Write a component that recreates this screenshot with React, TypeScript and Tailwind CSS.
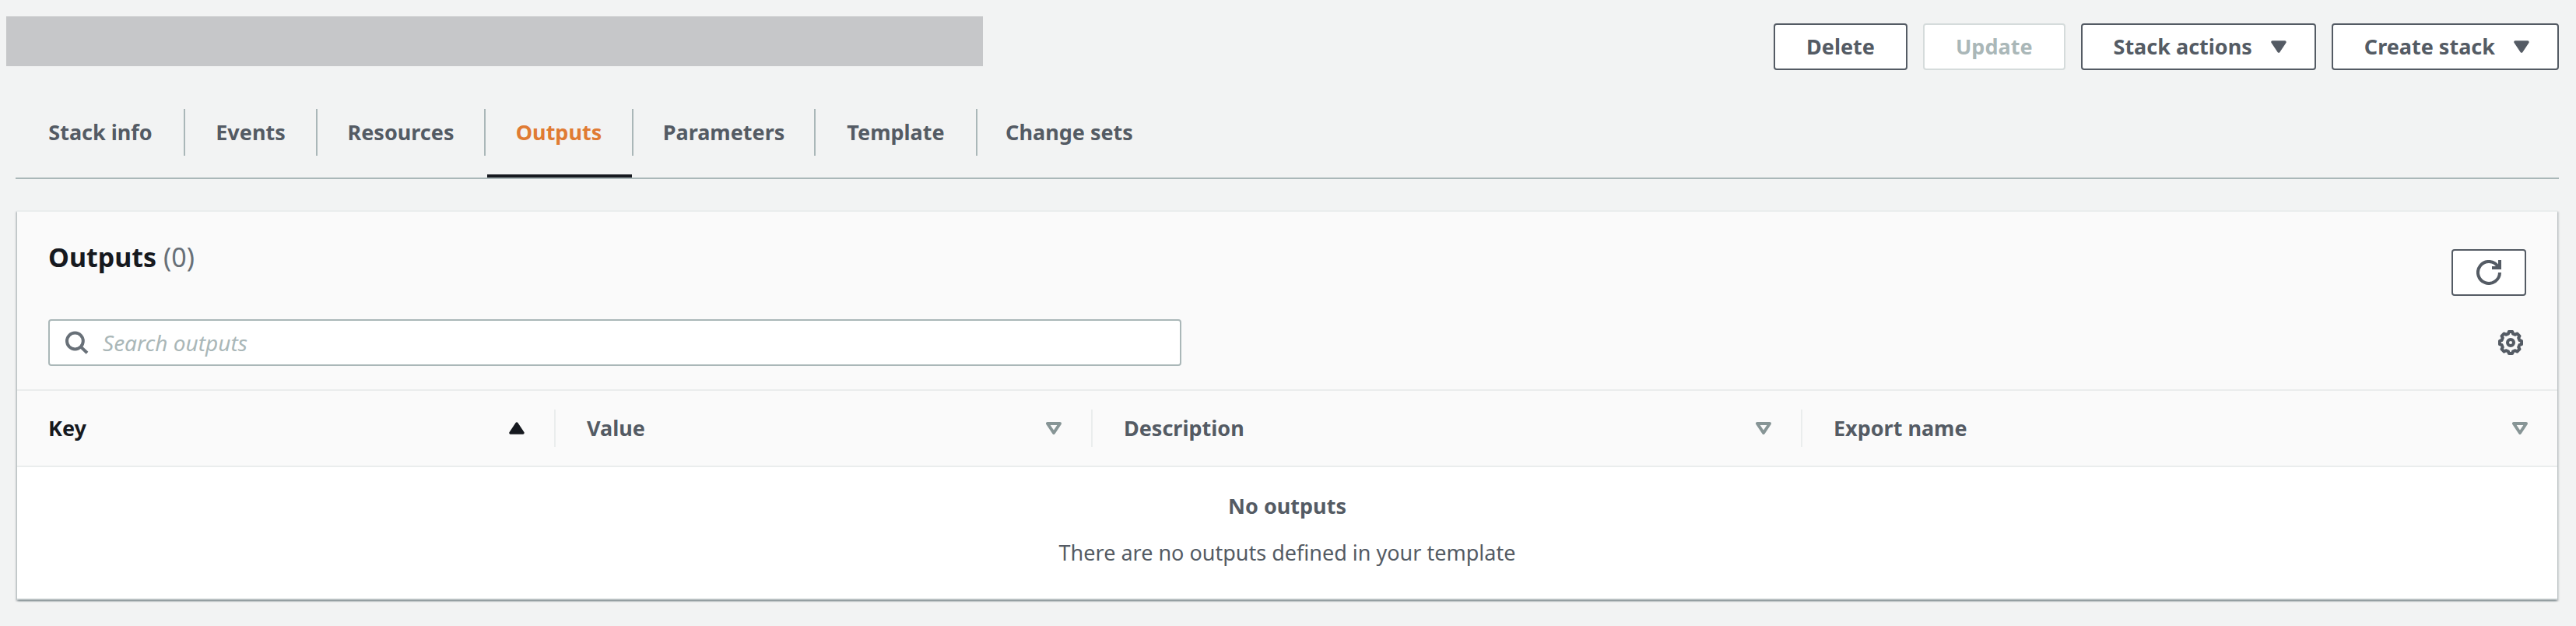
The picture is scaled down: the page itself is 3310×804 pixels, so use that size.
import type { ReactNode } from "react";

const tabs = [
  { label: "Stack info", width: "min-w-[216px]" },
  { label: "Events", width: "min-w-[170px]" },
  { label: "Resources", width: "min-w-[216px]" },
  { label: "Outputs", width: "min-w-[190px]" },
  { label: "Parameters", width: "min-w-[234px]" },
  { label: "Template", width: "min-w-[208px]" },
  { label: "Change sets", width: "min-w-[236px]" },
];

const columns = [
  { label: "Key", width: "w-[21.2%]", sorted: true },
  { label: "Value", width: "w-[21.14%]", sorted: false },
  { label: "Description", width: "w-[27.94%]", sorted: false },
  { label: "Export name", width: "w-[29.72%]", sorted: false },
];

function CaretDown() {
  return (
    <svg viewBox="0 0 20 16" className="h-4 w-5" aria-hidden="true">
      <path d="M2 2h16L10 14z" fill="currentColor" stroke="currentColor" strokeWidth="3.4" strokeLinejoin="round" />
    </svg>
  );
}

function SortIcon({ sorted }: { sorted: boolean }) {
  return sorted ? (
    <svg viewBox="0 0 20 16" className="h-4 w-5 text-[#16191f]" aria-hidden="true">
      <path d="M2 14h16L10 2z" fill="currentColor" stroke="currentColor" strokeWidth="3.4" strokeLinejoin="round" />
    </svg>
  ) : (
    <svg viewBox="0 0 20 16" className="h-4 w-5 text-[#879596]" aria-hidden="true">
      <path d="M2 2h16L10 14z" fill="none" stroke="currentColor" strokeWidth="4" strokeLinejoin="round" />
    </svg>
  );
}

function RefreshIcon() {
  return (
    <svg viewBox="0 0 16 16" className="size-8" fill="none" stroke="currentColor" strokeWidth="2" aria-hidden="true">
      <path d="M10 5h5V0" />
      <path d="M15 8a7 7 0 1 1-1.1-3.8" />
    </svg>
  );
}

function SearchIcon() {
  return (
    <svg viewBox="0 0 16 16" className="size-8" fill="none" stroke="currentColor" strokeWidth="2" aria-hidden="true">
      <circle cx="7.2" cy="7" r="5.2" />
      <path d="m11 10.8 4 3.8" />
    </svg>
  );
}

function GearIcon() {
  return (
    <svg viewBox="0 0 32 32" className="size-8" fill="none" stroke="currentColor" strokeWidth="4" strokeLinejoin="round" aria-hidden="true">
      <path d="M13.8 2h4.4l.8 2.6 3 1.2 2.4-1.3 3.1 3.1-1.3 2.4 1.2 3 2.6.8v4.4l-2.6.8-1.2 3 1.3 2.4-3.1 3.1-2.4-1.3-3 1.2-.8 2.6h-4.4l-.8-2.6-3-1.2-2.4 1.3-3.1-3.1 1.3-2.4-1.2-3-2.6-.8v-4.4l2.6-.8 1.2-3-1.3-2.4 3.1-3.1 2.4 1.3 3-1.2z" />
      <circle cx="16" cy="16" r="4" />
    </svg>
  );
}

function ActionButton({ children, disabled, menu }: { children: ReactNode; disabled?: boolean; menu?: boolean }) {
  return (
    <button
      type="button"
      disabled={disabled}
      aria-haspopup={menu ? "menu" : undefined}
      className={`flex h-[60px] items-center gap-6 rounded border-2 border-[#545b64] bg-white pl-10 font-bold disabled:border-[#d5dbdb] disabled:text-[#aab7b8] ${menu ? "pr-9" : "pr-10"}`}
    >
      {children}
      {menu && <CaretDown />}
    </button>
  );
}

export default function App() {
  return (
    <div className="min-h-screen bg-[#f2f3f3] pb-[34px] font-['Noto_Sans',sans-serif] text-[27px] leading-[60px] text-[#545b64]">
      <header className="flex items-start justify-between pt-[21px] pr-[22px] pl-2">
        <div className="h-16 w-[38.25%] bg-[#c6c7c9]" />
        <div className="mt-[9px] flex gap-5">
          <ActionButton>Delete</ActionButton>
          <ActionButton disabled>Update</ActionButton>
          <ActionButton menu>Stack actions</ActionButton>
          <ActionButton menu>Create stack</ActionButton>
        </div>
      </header>

      <nav className="mr-[22px] ml-5 mt-[50px] flex border-b-2 border-[#aab7b8] pl-[2px]" aria-label="Stack details">
        {tabs.map((tab, i) => {
          const active = tab.label === "Outputs";
          const last = i === tabs.length - 1;
          return (
            <a
              key={tab.label}
              href={"#" + tab.label.toLowerCase().replace(" ", "-")}
              aria-current={active ? "page" : undefined}
              className={`flex flex-col justify-between font-bold ${tab.width} ${active ? "text-[#e07b33]" : ""}`}
            >
              <span className={`block h-[60px] text-center ${last ? "" : "border-r-2 border-[#aab7b8]"}`}>{tab.label}</span>
              <span className={`mx-[2px] mt-6 block h-1 ${active ? "bg-[#16191f]" : ""}`} />
            </a>
          );
        })}
      </nav>

      <section className="mr-6 ml-[22px] mt-10 border-y-2 border-[#eaeded] bg-white shadow-[0_2px_2px_0_rgba(0,28,36,0.3),2px_2px_2px_0_rgba(0,28,36,0.15),-2px_2px_2px_0_rgba(0,28,36,0.15)]">
        <div className="bg-[#fafafa] px-10 pb-[30px]">
          <div className="flex items-start justify-between">
            <h2 className="mt-[38px] text-[34px] leading-10 font-bold text-[#16191f]">
              Outputs <span className="font-normal text-[#687078]">(0)</span>
            </h2>
            <button type="button" aria-label="Refresh" className="mt-12 flex h-[60px] w-24 items-center justify-center rounded border-2 border-[#545b64] bg-white">
              <RefreshIcon />
            </button>
          </div>
          <div className="mt-[30px] flex items-center justify-between">
            <label className="flex h-[60px] w-[45.73%] items-center gap-[18px] rounded border-2 border-[#aab7b8] bg-white pr-4 pl-[18px] text-[#687078]">
              <SearchIcon />
              <input
                type="search"
                aria-label="Search outputs"
                placeholder="Search outputs"
                className="h-14 min-w-0 flex-1 text-[28px] outline-none placeholder:text-[#aab7b8] placeholder:italic"
              />
            </label>
            <button type="button" aria-label="Preferences" className="mr-1">
              <GearIcon />
            </button>
          </div>
        </div>

        <table className="w-full table-fixed border-collapse">
          <thead>
            <tr className="border-y-2 border-[#eaeded] bg-[#fafafa]">
              {columns.map((col, i) => (
                <th
                  key={col.label}
                  scope="col"
                  aria-sort={col.sorted ? "ascending" : "none"}
                  className={`px-0 py-6 text-left font-bold ${col.width} ${col.sorted ? "text-[#16191f]" : ""}`}
                >
                  <button
                    type="button"
                    className={`flex h-12 w-full items-center justify-between pr-[38px] pl-10 ${i < columns.length - 1 ? "border-r-2 border-[#eaeded]" : ""}`}
                  >
                    {col.label}
                    <SortIcon sorted={col.sorted} />
                  </button>
                </th>
              ))}
            </tr>
          </thead>
          <tbody>
            <tr>
              <td colSpan={4} className="px-10 pt-5 pb-7 text-center">
                <p className="font-bold">No outputs</p>
                <p>There are no outputs defined in your template</p>
              </td>
            </tr>
          </tbody>
        </table>
      </section>
    </div>
  );
}
